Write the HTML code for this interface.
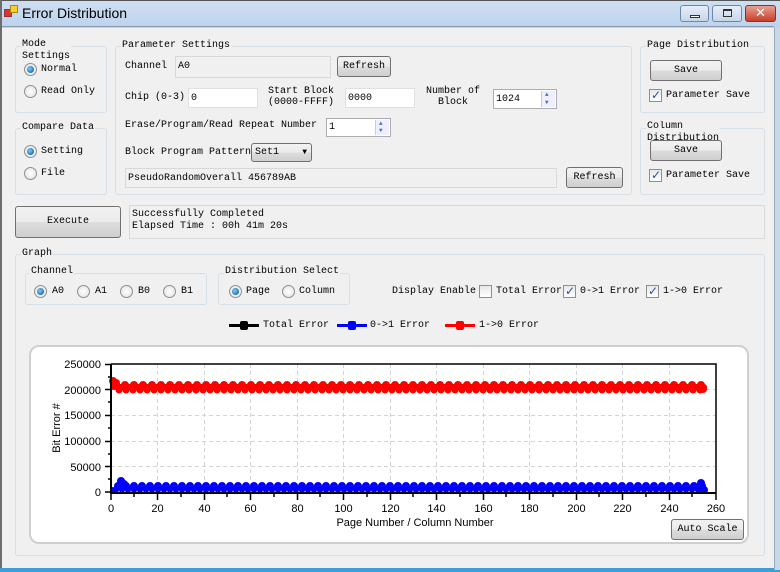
<!DOCTYPE html>
<html><head><meta charset="utf-8"><style>
*{box-sizing:border-box;margin:0;padding:0}
body{width:780px;height:572px;overflow:hidden;background:#f0f0f0;font-family:"Liberation Mono","Noto Sans CJK SC",monospace;font-size:10px;color:#000;position:relative}
.a{position:absolute;white-space:nowrap;line-height:16px}
.g{position:absolute;border:1px solid #d5dfe5;border-radius:3px}
.t{position:absolute;background:#f0f0f0;padding:0 1px;line-height:13px}
.btn{position:absolute;border:1px solid #707070;border-radius:3px;background:linear-gradient(#f2f2f2 0,#ebebeb 50%,#dddddd 51%,#cfcfcf 100%);text-align:center;line-height:19px}
.tb{position:absolute;border:1px solid #abadb3;background:#fff;padding-left:2px;line-height:19px}
.rd{position:absolute;width:13px;height:13px;border-radius:50%;border:1px solid #8e8f8f;background:radial-gradient(#fff,#e0e0e0)}
.rd.on::after{content:"";position:absolute;left:2px;top:2px;width:7px;height:7px;border-radius:50%;background:radial-gradient(circle at 40% 40%,#7ed0ff,#1f6fb0 70%,#0c3d6e)}
.cb{position:absolute;width:13px;height:13px;border:1px solid #8e8f8f;background:linear-gradient(#e8e8e8,#fff)}
.cb.on::after{content:"✓";position:absolute;left:1px;top:-2px;font:bold 12px "DejaVu Sans",sans-serif;color:#2b4f9a}
.spin{position:absolute;right:1px;top:1px;width:14px;bottom:1px;border-left:1px solid #ccc;background:#eef}
.spin::before{content:"▲";position:absolute;top:0;left:3px;font-size:6px;line-height:8px;color:#4a6fb0}
.spin::after{content:"▼";position:absolute;bottom:0;left:3px;font-size:6px;line-height:8px;color:#4a6fb0}
</style></head><body>
<div class="a" style="left:0;top:0;width:780px;height:28px;background:linear-gradient(#cfdff2,#bcd3ec);border-top:1px solid #555"></div>
<div class="a" style="left:0;top:0;width:2px;height:572px;background:#6d6d6d"></div>
<div class="a" style="left:0;top:568px;width:780px;height:4px;background:#3aa0d8"></div>
<div class="a" style="left:774px;top:28px;width:6px;height:542px;background:#c6d8ec;border-left:1px solid #9ab"></div>
<div class="a" style="left:2px;top:26px;width:772px;height:1px;background:#8a9bb0"></div>
<div class="a" style="left:4px;top:9px;width:8px;height:8px;background:#d33;border:1px solid #933"></div>
<div class="a" style="left:10px;top:5px;width:8px;height:8px;background:#fc3;border:1px solid #a80"></div>
<div class="a" style="left:22px;top:5px;font:14px 'Liberation Sans',sans-serif;color:#000">Error Distribution</div>
<div class="a" style="left:680px;top:5px;width:29px;height:17px;border:1px solid #6f86a8;border-radius:3px;background:linear-gradient(#e6eef8,#c6d6ea)"><div class="a" style="left:9px;top:9px;width:10px;height:3px;border:1px solid #333;background:#fff"></div></div>
<div class="a" style="left:712px;top:5px;width:30px;height:17px;border:1px solid #6f86a8;border-radius:3px;background:linear-gradient(#e6eef8,#c6d6ea)"><div class="a" style="left:10px;top:3px;width:9px;height:8px;border:1px solid #333;border-top-width:2px"></div></div>
<div class="a" style="left:745px;top:5px;width:31px;height:17px;border:1px solid #7a3a30;border-radius:3px;background:linear-gradient(#e8a090,#c7402a);color:#fff;font:bold 13px 'DejaVu Sans',sans-serif;text-align:center;line-height:15px">✕</div>

<div class="g" style="left:15px;top:46px;width:92px;height:67px"></div>
<div class="t" style="left:21px;top:39px;line-height:12px">Mode<br>Settings</div>
<div class="rd on" style="left:24px;top:63px"></div><div class="a" style="left:41px;top:62px">Normal</div>
<div class="rd" style="left:24px;top:85px"></div><div class="a" style="left:41px;top:84px">Read Only</div>
<div class="g" style="left:15px;top:128px;width:92px;height:67px"></div>
<div class="t" style="left:21px;top:121px">Compare Data</div>
<div class="rd on" style="left:24px;top:145px"></div><div class="a" style="left:41px;top:144px">Setting</div>
<div class="rd" style="left:24px;top:167px"></div><div class="a" style="left:41px;top:166px">File</div>

<div class="g" style="left:115px;top:46px;width:517px;height:149px"></div>
<div class="t" style="left:121px;top:39px">Parameter Settings</div>
<div class="a" style="left:125px;top:59px">Channel</div>
<div class="tb" style="left:175px;top:56px;width:156px;height:22px;background:#f0f0f0;border-color:#d8d8d8">A0</div>
<div class="btn" style="left:337px;top:56px;width:54px;height:21px">Refresh</div>
<div class="a" style="left:125px;top:90px">Chip (0-3)</div>
<div class="tb" style="left:188px;top:88px;width:70px;height:20px;border-color:#e0e0e0">0</div>
<div class="a" style="left:268px;top:86px;text-align:center;line-height:11px">Start Block<br>(0000-FFFF)</div>
<div class="tb" style="left:345px;top:88px;width:70px;height:20px;border-color:#e0e0e0">0000</div>
<div class="a" style="left:426px;top:86px;text-align:center;line-height:11px">Number of<br>Block</div>
<div class="tb" style="left:493px;top:89px;width:64px;height:20px">1024<div class="spin"></div></div>
<div class="a" style="left:125px;top:118px">Erase/Program/Read Repeat Number</div>
<div class="tb" style="left:326px;top:118px;width:65px;height:19px;line-height:17px">1<div class="spin"></div></div>
<div class="a" style="left:125px;top:145px">Block Program Pattern</div>
<div class="btn" style="left:251px;top:143px;width:61px;height:19px;text-align:left;padding-left:3px;line-height:17px">Set1<span style="position:absolute;right:4px;font-size:8px">▼</span></div>
<div class="tb" style="left:125px;top:168px;width:432px;height:20px;background:#f0f0f0;border-color:#d8d8d8">PseudoRandomOverall 456789AB</div>
<div class="btn" style="left:566px;top:167px;width:57px;height:21px">Refresh</div>

<div class="g" style="left:640px;top:46px;width:125px;height:67px"></div>
<div class="t" style="left:646px;top:39px">Page Distribution</div>
<div class="btn" style="left:650px;top:60px;width:72px;height:21px">Save</div>
<div class="cb on" style="left:649px;top:89px"></div><div class="a" style="left:666px;top:88px">Parameter Save</div>
<div class="g" style="left:640px;top:128px;width:125px;height:67px"></div>
<div class="t" style="left:646px;top:121px;height:19px;overflow:hidden;width:74px;line-height:12px">Column<br>Distribution</div>
<div class="btn" style="left:650px;top:140px;width:72px;height:21px">Save</div>
<div class="cb on" style="left:649px;top:169px"></div><div class="a" style="left:666px;top:168px">Parameter Save</div>

<div class="btn" style="left:15px;top:206px;width:106px;height:32px;line-height:30px">Execute</div>
<div class="a" style="left:129px;top:205px;width:636px;height:34px;border:1px solid #d8d8d8;padding:3px 0 0 2px;line-height:12px">Successfully Completed<br>Elapsed Time : 00h 41m 20s</div>

<div class="g" style="left:15px;top:254px;width:750px;height:302px"></div>
<div class="t" style="left:21px;top:247px">Graph</div>
<div class="g" style="left:25px;top:273px;width:182px;height:32px"></div>
<div class="t" style="left:30px;top:265px">Channel</div>
<div class="rd on" style="left:34px;top:285px"></div><div class="a" style="left:52px;top:284px">A0</div>
<div class="rd" style="left:77px;top:285px"></div><div class="a" style="left:95px;top:284px">A1</div>
<div class="rd" style="left:120px;top:285px"></div><div class="a" style="left:138px;top:284px">B0</div>
<div class="rd" style="left:163px;top:285px"></div><div class="a" style="left:181px;top:284px">B1</div>
<div class="g" style="left:218px;top:273px;width:132px;height:32px"></div>
<div class="t" style="left:224px;top:265px">Distribution Select</div>
<div class="rd on" style="left:229px;top:285px"></div><div class="a" style="left:246px;top:284px">Page</div>
<div class="rd" style="left:282px;top:285px"></div><div class="a" style="left:299px;top:284px">Column</div>
<div class="a" style="left:392px;top:284px">Display Enable</div>
<div class="cb" style="left:479px;top:285px"></div><div class="a" style="left:496px;top:284px">Total Error</div>
<div class="cb on" style="left:563px;top:285px"></div><div class="a" style="left:580px;top:284px">0->1 Error</div>
<div class="cb on" style="left:646px;top:285px"></div><div class="a" style="left:663px;top:284px">1->0 Error</div>

<div class="a" style="left:229px;top:324px;width:30px;height:3px;background:#000"></div><div class="a" style="left:240px;top:321px;width:8px;height:9px;background:#000;border-radius:2px"></div><div class="a" style="left:263px;top:318px">Total Error</div>
<div class="a" style="left:337px;top:324px;width:30px;height:3px;background:#0000ff"></div><div class="a" style="left:348px;top:321px;width:8px;height:9px;background:#0000ff;border-radius:2px"></div><div class="a" style="left:370px;top:318px">0->1 Error</div>
<div class="a" style="left:445px;top:324px;width:30px;height:3px;background:#ff0000"></div><div class="a" style="left:456px;top:321px;width:8px;height:9px;background:#ff0000;border-radius:2px"></div><div class="a" style="left:479px;top:318px">1->0 Error</div>

<div class="a" style="left:29px;top:345px;width:720px;height:199px;background:#fff;border:2px solid #cfcfcf;border-radius:10px"></div>
<svg class="a" style="left:0;top:0" width="780" height="572" font-family="Liberation Sans,sans-serif" font-size="11">
<g stroke="#d4d4d4" stroke-dasharray="4,3" stroke-width="1">
<line x1="111" y1="389.5" x2="716" y2="389.5"/><line x1="111" y1="415.5" x2="716" y2="415.5"/><line x1="111" y1="441.5" x2="716" y2="441.5"/><line x1="111" y1="466.5" x2="716" y2="466.5"/>
<line x1="157.5" y1="364" x2="157.5" y2="492"/><line x1="204.5" y1="364" x2="204.5" y2="492"/><line x1="250.5" y1="364" x2="250.5" y2="492"/><line x1="297.5" y1="364" x2="297.5" y2="492"/><line x1="343.5" y1="364" x2="343.5" y2="492"/><line x1="390.5" y1="364" x2="390.5" y2="492"/><line x1="436.5" y1="364" x2="436.5" y2="492"/><line x1="483.5" y1="364" x2="483.5" y2="492"/><line x1="529.5" y1="364" x2="529.5" y2="492"/><line x1="576.5" y1="364" x2="576.5" y2="492"/><line x1="622.5" y1="364" x2="622.5" y2="492"/><line x1="669.5" y1="364" x2="669.5" y2="492"/>
</g>
<g stroke-linecap="round">
<line x1="116" y1="385" x2="704" y2="385" stroke="#f00" stroke-width="8" stroke-dasharray="0 9"/>
<line x1="119" y1="390" x2="704" y2="390" stroke="#f00" stroke-width="7" stroke-dasharray="0 7"/>
<line x1="120" y1="387" x2="704" y2="387" stroke="#f00" stroke-width="6"/>
<circle cx="113" cy="381" r="4" fill="#f00"/><circle cx="116" cy="383" r="4" fill="#f00"/><circle cx="114" cy="386" r="4" fill="#f00"/><circle cx="703" cy="389" r="4" fill="#f00"/>
<line x1="118" y1="486" x2="706" y2="486" stroke="#00f" stroke-width="8" stroke-dasharray="0 8"/>
<line x1="116" y1="490" x2="706" y2="490" stroke="#00f" stroke-width="6" stroke-dasharray="0 6"/>
<line x1="120" y1="488" x2="704" y2="488" stroke="#00f" stroke-width="5"/>
<circle cx="121" cy="481" r="4" fill="#00f"/><circle cx="124" cy="484" r="4" fill="#00f"/><circle cx="113" cy="490" r="3" fill="#00f"/><circle cx="701" cy="483" r="4" fill="#00f"/><circle cx="704" cy="490" r="4" fill="#00f"/>
</g>
<g stroke="#000" fill="none">
<path d="M111,364H716V492" stroke-width="1.5"/>
<path d="M111,364V493H716" stroke-width="2"/>
<path d="M105,364.5h6M105,389.5h6M105,415.5h6M105,441.5h6M105,466.5h6M105,492h6M108,377h3M108,402h3M108,428h3M108,454h3M108,479h3" stroke-width="1.5"/>
<path d="M111,492v8M157.5,492v8M204.5,492v8M250.5,492v8M297.5,492v8M343.5,492v8M390.5,492v8M436.5,492v8M483.5,492v8M529.5,492v8M576.5,492v8M622.5,492v8M669.5,492v8M716,492v8M134,492v5M181,492v5M227,492v5M274,492v5M320,492v5M367,492v5M413,492v5M460,492v5M506,492v5M553,492v5M599,492v5M646,492v5M692,492v5" stroke-width="1.5"/>
</g>
<g text-anchor="end" fill="#000">
<text x="101" y="368">250000</text><text x="101" y="394">200000</text><text x="101" y="419">150000</text><text x="101" y="445">100000</text><text x="101" y="471">50000</text><text x="101" y="496">0</text>
</g>
<g text-anchor="middle" fill="#000">
<text x="111" y="512">0</text><text x="157.5" y="512">20</text><text x="204.5" y="512">40</text><text x="250.5" y="512">60</text><text x="297.5" y="512">80</text><text x="343.5" y="512">100</text><text x="390.5" y="512">120</text><text x="436.5" y="512">140</text><text x="483.5" y="512">160</text><text x="529.5" y="512">180</text><text x="576.5" y="512">200</text><text x="622.5" y="512">220</text><text x="669.5" y="512">240</text><text x="716" y="512">260</text>
<text x="415" y="526">Page Number / Column Number</text>
<text transform="translate(60,428) rotate(-90)">Bit Error #</text>
</g>
</svg>
<div class="btn" style="left:671px;top:519px;width:73px;height:21px">Auto Scale</div>
</body></html>
